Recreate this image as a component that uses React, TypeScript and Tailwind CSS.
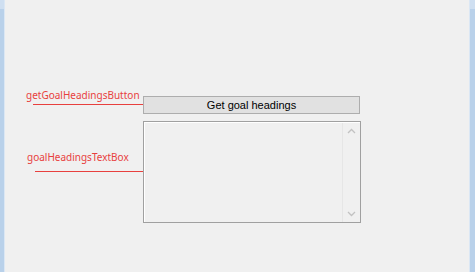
export default function App() {
  return (
    <div className="w-[475px] h-[272px] flex bg-[#f0f0f0] overflow-hidden">
      {/* window frame left */}
      <div className="w-[4px] flex flex-col bg-[#b9d1ea]">
        <div className="h-[9px] bg-[#cfdff1]" />
      </div>
      <div className="w-px bg-[#dbe7f4]" />

      <main className="flex-1 flex flex-col pt-[88px]">
        <div className="flex">
          <div className="w-[138px] flex flex-col">
            <span
              className="pl-[21px] pt-[1px] text-[10px] leading-[13px] text-[#e8403e] whitespace-nowrap"
              style={{ fontFamily: '"Noto Sans", sans-serif' }}
            >
              getGoalHeadingsButton
            </span>
            <div className="ml-[28px] mt-[2px] h-px bg-[#e8403e]" />
          </div>
          <button
            className="mt-[8px] w-[217px] h-[18px] border border-[#adadad] bg-[#e1e1e1] text-[11px] leading-none text-black flex items-center justify-center"
            style={{ fontFamily: '"Liberation Sans", Arial, sans-serif' }}
          >
            Get goal headings
          </button>
        </div>

        <div className="flex mt-[7px]">
          <div className="w-[138px] flex flex-col pt-[30px]">
            <span
              className="pl-[22px] text-[10px] leading-[13px] text-[#e8403e] whitespace-nowrap"
              style={{ fontFamily: '"Noto Sans", sans-serif' }}
            >
              goalHeadingsTextBox
            </span>
            <div className="ml-[30px] mt-[7px] h-px bg-[#e8403e]" />
          </div>
          <div className="w-[218px] h-[102px] border border-[#a0a0a0]">
            <div className="h-full flex border-t border-l border-white">
              <div className="flex-1" />
              <div className="w-[18px] flex flex-col items-center justify-between py-[5px] border-l border-[#e6e6e6]">
                <svg width="9" height="6" viewBox="0 0 9 6" fill="none" stroke="#c2c2c2" strokeWidth="1.3">
                  <path d="M1 5 L4.5 1.5 L8 5" />
                </svg>
                <svg width="9" height="6" viewBox="0 0 9 6" fill="none" stroke="#c2c2c2" strokeWidth="1.3">
                  <path d="M1 1 L4.5 4.5 L8 1" />
                </svg>
              </div>
            </div>
          </div>
        </div>
      </main>

      {/* window frame right */}
      <div className="w-px bg-[#dbe7f4]" />
      <div className="w-[5px] flex flex-col bg-[#b9d1ea]">
        <div className="h-[9px] bg-[#cfdff1]" />
      </div>
    </div>
  );
}
